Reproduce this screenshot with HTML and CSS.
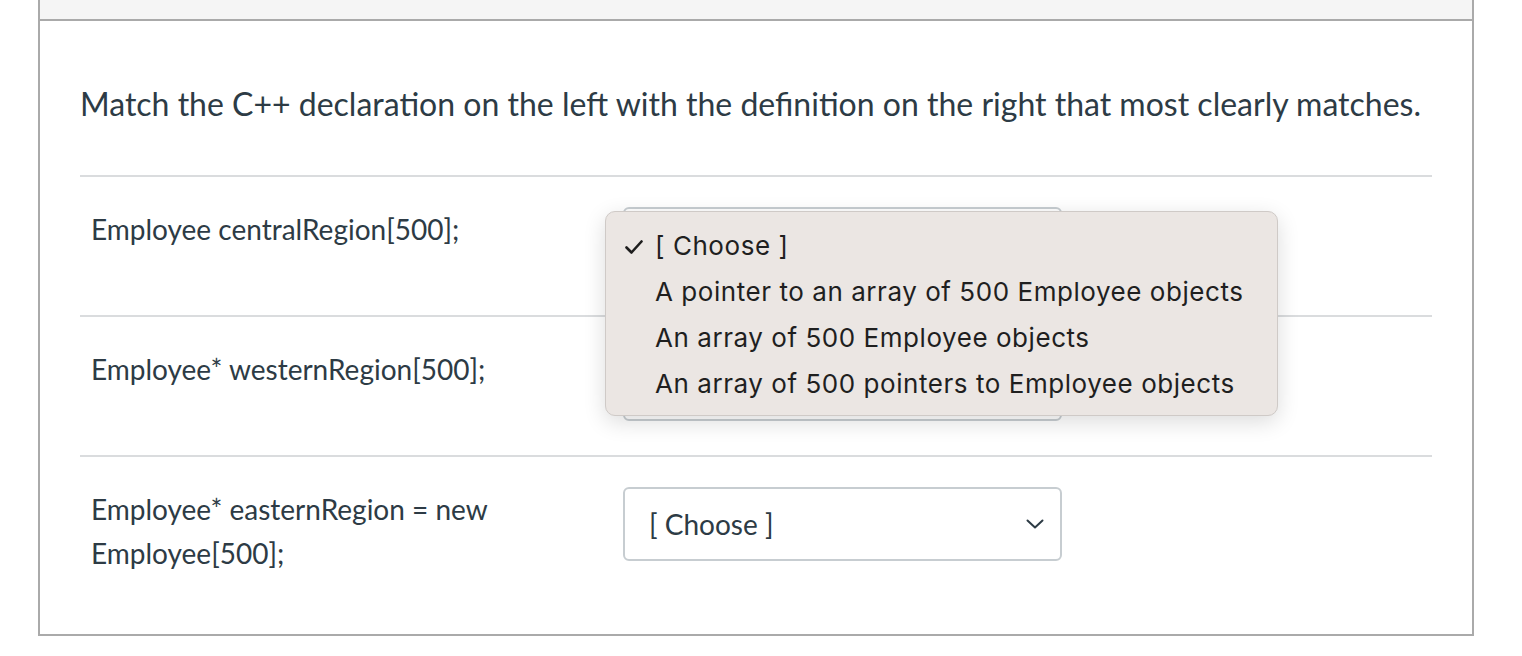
FILE: index.html
```html
<!DOCTYPE html>
<html lang="en">
<head>
    <meta charset="UTF-8">
    <title>Matching Question</title>
    <link rel="stylesheet" href="styles.css">
</head>
<body>
    <div class="question">
        <div class="question-header"></div>
        <div class="question-body">
            <p class="question-text">Match the C++ declaration on the left with the definition on the right that most clearly matches.</p>

            <div class="answer">
                <div class="answer-label">Employee centralRegion[500];</div>
                <div class="answer-select">
                    <div class="select">
                        <span>[ Choose ]</span>
                        <svg class="chevron" width="18" height="10" viewBox="0 0 18 10"><path d="M1.5 1.5 L9 8.5 L16.5 1.5" fill="none" stroke="#2d3b45" stroke-width="2" stroke-linecap="round" stroke-linejoin="round"/></svg>
                    </div>
                    <ul class="menu">
                        <li class="selected">
                            <svg class="check" width="18" height="14" viewBox="0 0 18 14"><path d="M1.5 7.5 L6.5 12.5 L16.5 1.5" fill="none" stroke="#1d1d1d" stroke-width="2.6" stroke-linecap="round" stroke-linejoin="round"/></svg>
                            [ Choose ]
                        </li>
                        <li>A pointer to an array of 500 Employee objects</li>
                        <li>An array of 500 Employee objects</li>
                        <li>An array of 500 pointers to Employee objects</li>
                    </ul>
                </div>
            </div>

            <div class="answer">
                <div class="answer-label">Employee* westernRegion[500];</div>
                <div class="answer-select">
                    <div class="select">
                        <span>[ Choose ]</span>
                        <svg class="chevron" width="18" height="10" viewBox="0 0 18 10"><path d="M1.5 1.5 L9 8.5 L16.5 1.5" fill="none" stroke="#2d3b45" stroke-width="2" stroke-linecap="round" stroke-linejoin="round"/></svg>
                    </div>
                </div>
            </div>

            <div class="answer">
                <div class="answer-label">Employee* easternRegion = new Employee[500];</div>
                <div class="answer-select">
                    <div class="select">
                        <span>[ Choose ]</span>
                        <svg class="chevron" width="18" height="10" viewBox="0 0 18 10"><path d="M1.5 1.5 L9 8.5 L16.5 1.5" fill="none" stroke="#2d3b45" stroke-width="2" stroke-linecap="round" stroke-linejoin="round"/></svg>
                    </div>
                </div>
            </div>
        </div>
    </div>
</body>
</html>
```

FILE: styles.css
```css
body {
    margin: 0;
    background: #fff;
    font-family: 'Lato', 'Liberation Sans', sans-serif;
    color: #2d3b45;
}
.question {
    margin-left: 38px;
    width: 1436px;
    box-sizing: border-box;
    border: 2px solid #aaaaaa;
    border-top: none;
}
.question-header {
    height: 19px;
    background: #f5f5f5;
    border-bottom: 2px solid #aaaaaa;
}
.question-body {
    padding: 62px 40px 25px 40px;
}
.question-text {
    margin: 0 0 50px 0;
    font-size: 32px;
    line-height: 42px;
}
.answer {
    display: flex;
    border-top: 2px solid #dadcde;
    padding: 30px 0 34px 0;
}
.answer-label {
    width: 512px;
    padding: 0 31px 0 11px;
    box-sizing: border-box;
    font-size: 28px;
    line-height: 44px;
}
.answer-select {
    position: relative;
    margin-left: 31px;
}
.select {
    width: 439px;
    height: 74px;
    box-sizing: border-box;
    border: 2px solid #c7cdd1;
    border-radius: 6px;
    display: flex;
    align-items: center;
    justify-content: space-between;
    padding: 0 16px 0 24px;
    font-size: 28px;
    background: #fff;
}
.menu {
    position: absolute;
    z-index: 10;
    left: -18px;
    top: 4px;
    width: 673px;
    box-sizing: border-box;
    margin: 0;
    padding: 11px 0 8px 0;
    list-style: none;
    background: #ebe6e3;
    border: 1px solid #cfcac7;
    border-radius: 10px;
    box-shadow: 0 6px 22px rgba(0, 0, 0, 0.14);
    font-family: 'Inter', 'Noto Sans', sans-serif;
    font-size: 26px;
    letter-spacing: 0.55px;
    color: #1f1f1f;
}
.menu li {
    position: relative;
    height: 46px;
    line-height: 46px;
    padding-left: 49px;
}
.menu .check {
    position: absolute;
    left: 19px;
    top: 17px;
}
```
